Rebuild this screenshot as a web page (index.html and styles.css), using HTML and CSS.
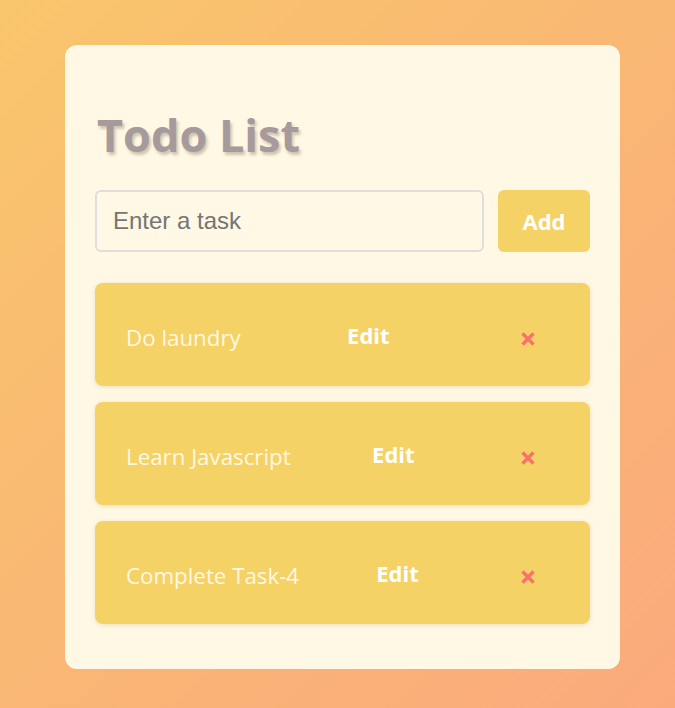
FILE: index.html
```html
<!DOCTYPE html>
<html lang="en">
<head>
<meta charset="utf-8">
<title>Todo List</title>
<link rel="stylesheet" href="styles.css">
</head>
<body>
  <div class="card">
    <h1 class="title">Todo List</h1>
    <div class="input-row">
      <input class="task-input" type="text" placeholder="Enter a task">
      <button class="add-btn">Add</button>
    </div>
    <ul class="list">
      <li class="item">
        <span class="item-text">Do laundry</span>
        <button class="edit-btn">Edit</button>
        <button class="del-btn" aria-label="Delete"><svg viewBox="0 0 14 14" width="14" height="14"><path d="M1.5 1.5 L12.5 12.5 M12.5 1.5 L1.5 12.5" stroke="#fb6f6c" stroke-width="3.2"/></svg></button>
      </li>
      <li class="item">
        <span class="item-text">Learn Javascript</span>
        <button class="edit-btn">Edit</button>
        <button class="del-btn" aria-label="Delete"><svg viewBox="0 0 14 14" width="14" height="14"><path d="M1.5 1.5 L12.5 12.5 M12.5 1.5 L1.5 12.5" stroke="#fb6f6c" stroke-width="3.2"/></svg></button>
      </li>
      <li class="item">
        <span class="item-text">Complete Task-4</span>
        <button class="edit-btn">Edit</button>
        <button class="del-btn" aria-label="Delete"><svg viewBox="0 0 14 14" width="14" height="14"><path d="M1.5 1.5 L12.5 12.5 M12.5 1.5 L1.5 12.5" stroke="#fb6f6c" stroke-width="3.2"/></svg></button>
      </li>
    </ul>
  </div>
</body>
</html>
```

FILE: styles.css
```css
html, body {
  margin: 0;
  padding: 0;
}
body {
  min-height: 708px;
  background: linear-gradient(135deg, #f9c66c 0%, #f9b774 50%, #fbaa7c 100%);
  font-family: "Open Sans", "Noto Sans", sans-serif;
  padding: 45px 0 0 65px;
  box-sizing: border-box;
}
.card {
  width: 555px;
  box-sizing: border-box;
  background: #fff8e5;
  border-radius: 12px;
  padding: 30px 30px 45px;
}
.title {
  margin: 31px 0 26px 2px;
  font-size: 45px;
  line-height: 58px;
  font-weight: 700;
  color: #a69a9d;
  text-shadow: 2px 3px 3px rgba(110, 100, 70, 0.35);
}
.input-row {
  display: flex;
  gap: 14px;
  margin-bottom: 31px;
}
.task-input {
  flex: 1;
  height: 62px;
  box-sizing: border-box;
  border: 2px solid #dedede;
  border-radius: 6px;
  background: #fff8e5;
  padding: 0 16px;
  font-family: "Liberation Sans", Arial, sans-serif;
  font-size: 24px;
  color: #333;
  outline: none;
}
.task-input::placeholder {
  color: #757575;
}
.add-btn {
  width: 92px;
  height: 62px;
  border: none;
  border-radius: 6px;
  background: #f5d266;
  color: #fff;
  font-family: "Open Sans", sans-serif;
  font-weight: 700;
  font-size: 22px;
  padding: 0;
}
.list {
  list-style: none;
  margin: 0;
  padding: 0;
  display: flex;
  flex-direction: column;
  gap: 16px;
}
.item {
  height: 103px;
  box-sizing: border-box;
  display: flex;
  align-items: center;
  justify-content: space-between;
  padding: 0 30px 0 31px;
  background: #f5d266;
  border-radius: 8px;
  box-shadow: 0 1px 4px rgba(180, 150, 60, 0.25);
}
.item-text {
  color: #fff8e2;
  font-size: 22.3px;
  padding-top: 5px;
}
.edit-btn {
  background: none;
  border: none;
  padding: 0;
  color: #fff;
  font-family: "Open Sans", sans-serif;
  font-weight: 700;
  font-size: 22px;
  padding-top: 1px;
}
.del-btn {
  background: none;
  border: none;
  width: 64px;
  padding: 0;
  display: flex;
  justify-content: center;
  padding-top: 9px;
}
.del-btn svg {
  display: block;
}
```
